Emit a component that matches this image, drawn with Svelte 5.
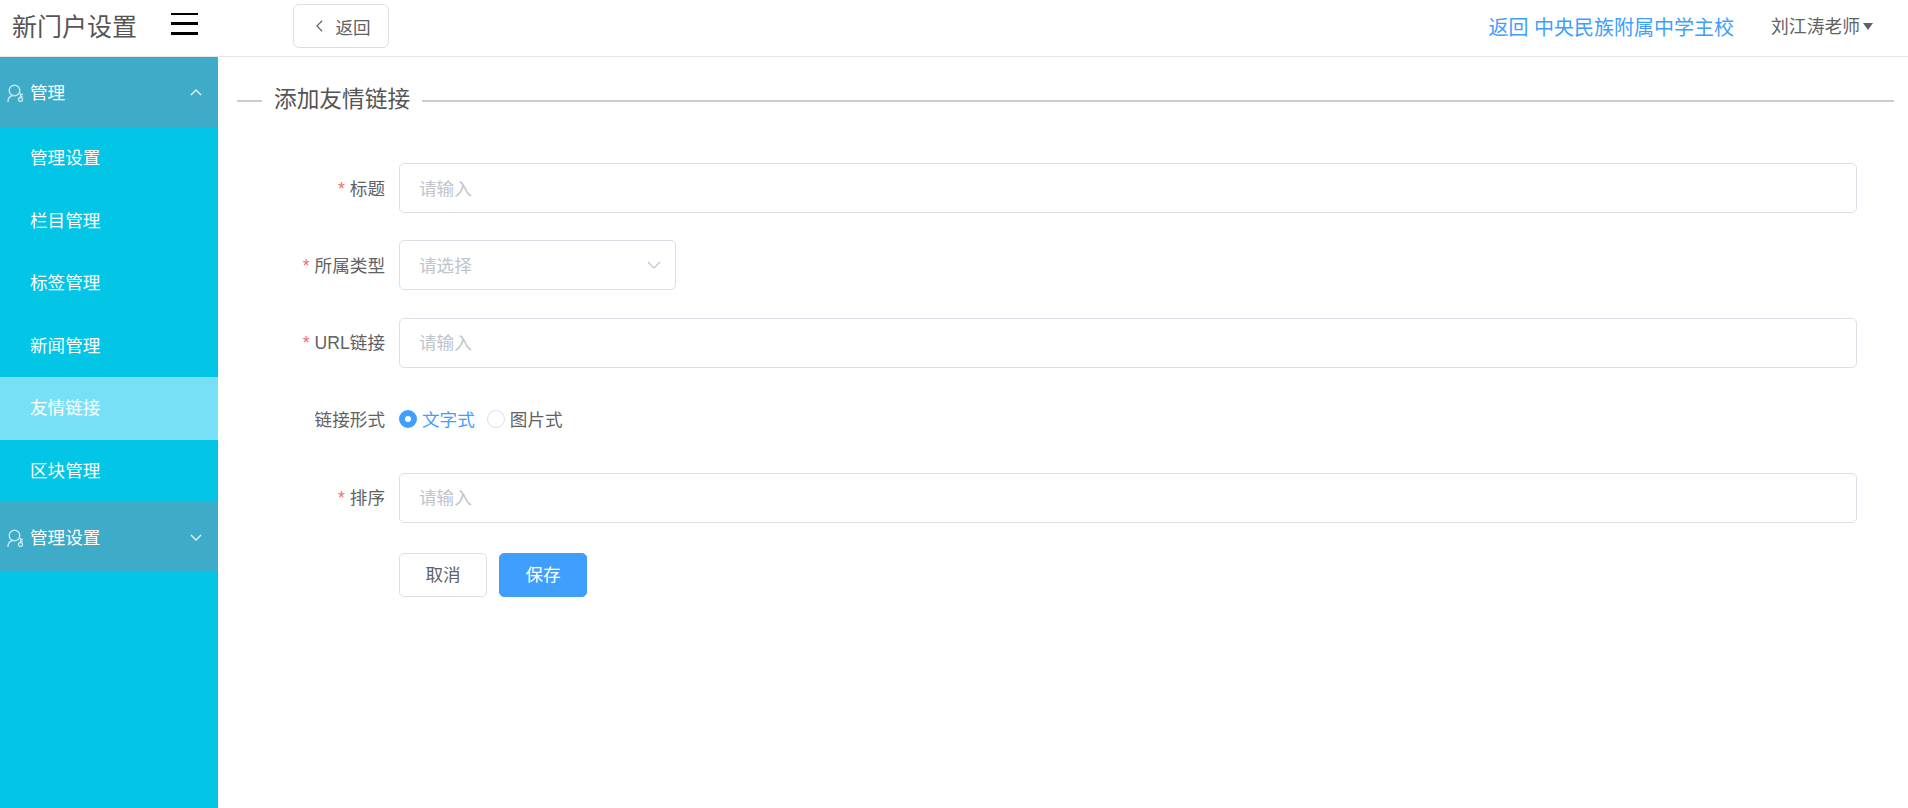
<script>
  const subs = ['管理设置', '栏目管理', '标签管理', '新闻管理', '友情链接', '区块管理'];
  const fields = [
    { latin: '', label: '标题', width: 'full' },
    { latin: '', label: '所属类型', width: 'select' },
    { latin: 'URL', label: '链接', width: 'full' }
  ];
</script>

{#snippet userIcon()}
  <svg class="uicon" viewBox="0 0 18 20" width="18" height="20" fill="none" stroke="currentColor" stroke-width="1.4" stroke-linecap="round">
    <circle cx="7.500" cy="8.500" r="5.300" />
    <path d="M1 19.500c0-3.500 2-5.500 5-6" />
    <circle cx="13.500" cy="17.500" r="2" />
    <path d="M13.500 15.500v-4M13.500 12.500h2M13.500 14.500h1.500" />
  </svg>
{/snippet}

{#snippet star()}<span class="star">*</span>{/snippet}

<div class="shell">
  <header class="top">
    <div class="title">新门户设置</div>
    <button class="burger" aria-label="menu"><i></i><i></i><i></i></button>
    <button class="back">
      <svg viewBox="0 0 10 16" width="9" height="14" fill="none" stroke="#606266" stroke-width="1.300"><path d="M8 2L2 8l6 6" /></svg>
      <span>返回</span>
    </button>
    <div class="right">
      <a class="home" href="#top">返回 中央民族附属中学主校</a>
      <span class="user"><span class="uname">刘江涛老师</span><span class="caret"></span></span>
    </div>
  </header>

  <div class="body">
    <aside class="side">
      <div class="group">
        {@render userIcon()}
        <span>管理</span>
        <svg class="chev" viewBox="0 0 12 7" width="12" height="7" fill="none" stroke="currentColor" stroke-width="1.300"><path d="M1 6l5-5 5 5" /></svg>
      </div>
      {#each subs as s}
        <div class="item" class:active={s === '友情链接'}>{s}</div>
      {/each}
      <div class="group">
        {@render userIcon()}
        <span>管理设置</span>
        <svg class="chev" viewBox="0 0 12 7" width="12" height="7" fill="none" stroke="currentColor" stroke-width="1.300"><path d="M1 1l5 5 5-5" /></svg>
      </div>
    </aside>

    <main class="main">
      <div class="heading">
        <span class="dash"></span>
        <h2>添加友情链接</h2>
        <span class="rule"></span>
      </div>

      <form class="form">
        {#each fields as f}
          <div class="row">
            <div class="label">{@render star()}{#if f.latin}<span class="latin">{f.latin}</span>{/if}{f.label}</div>
            {#if f.width === 'select'}
              <div class="select">
                <input placeholder="请选择" readonly />
                <svg viewBox="0 0 14 8" width="14" height="8" fill="none" stroke="#c0c4cc" stroke-width="1.200"><path d="M1 1l6 6 6-6" /></svg>
              </div>
            {:else}
              <input class="input" placeholder="请输入" />
            {/if}
          </div>
        {/each}

        <div class="row">
          <div class="label radio-label">链接形式</div>
          <div class="radios">
            <span class="radio on"><i></i><b>文字式</b></span>
            <span class="radio"><i></i><b>图片式</b></span>
          </div>
        </div>

        <div class="row">
          <div class="label">{@render star()}排序</div>
          <input class="input" placeholder="请输入" />
        </div>

        <div class="row actions">
          <div class="label"></div>
          <button type="button" class="btn">取消</button>
          <button type="button" class="btn primary">保存</button>
        </div>
      </form>
    </main>
  </div>
</div>

<style>
  :global(body) {
    margin: 0;
    background: #fff;
  }
  .shell {
    display: flex;
    flex-direction: column;
    height: 808px;
    overflow: hidden;
    font-family: "Noto Sans CJK SC", "Liberation Sans", sans-serif;
    color: #606266;
    font-size: 17.600px;
  }
  button, input {
    font-family: inherit;
  }
  .top {
    display: flex;
    align-items: center;
    height: 56px;
    flex: none;
    border-bottom: 1px solid #e6e6e6;
    padding-left: 12px;
    padding-right: 35px;
  }
  .title {
    width: 159px;
    font-size: 25px;
    color: #555;
    line-height: 46px;
    margin-top: -6px;
  }
  .burger {
    width: 27px;
    height: 22px;
    margin-top: -9px;
    padding: 0;
    border: 0;
    background: none;
    display: flex;
    flex-direction: column;
    justify-content: space-between;
  }
  .burger i {
    display: block;
    height: 2.500px;
    background: #000;
  }
  .back {
    margin-left: 95px;
    margin-top: -4px;
    width: 96px;
    height: 44px;
    border: 1px solid #dcdfe6;
    border-radius: 6px;
    background: #fff;
    color: #606266;
    font-size: 17.600px;
    display: flex;
    align-items: center;
    justify-content: center;
    gap: 11px;
    padding: 0 0 0 4px;
  }
  .right {
    margin-left: auto;
    display: flex;
    align-items: center;
    gap: 37px;
    margin-top: -3px;
  }
  .home {
    color: #409eff;
    font-size: 20px;
    word-spacing: 1px;
    text-decoration: none;
  }
  .user {
    display: flex;
    align-items: center;
    color: #606266;
    font-size: 17.800px;
  }
  .uname {
    margin-top: -3px;
  }
  .caret {
    margin-left: 3px;
    border-left: 5.500px solid transparent;
    border-right: 5.500px solid transparent;
    border-top: 7px solid #606266;
  }
  .body {
    flex: 1;
    display: flex;
    min-height: 0;
  }
  .side {
    width: 218px;
    flex: none;
    background: #03c5e6;
    color: #fff;
  }
  .group {
    height: 70px;
    background: #3eabc8;
    display: flex;
    align-items: center;
    padding: 0 16px 0 7px;
    gap: 5px;
  }
  .group span {
    flex: 1;
    margin-top: -2px;
  }
  .uicon {
    color: #c4e8f1;
    flex: none;
  }
  .chev {
    flex: none;
    color: #e8f7fb;
  }
  .item {
    height: 62.500px;
    line-height: 59px;
    padding-left: 30px;
  }
  .item.active {
    background: #77e0f7;
  }
  .main {
    flex: 1;
    min-width: 0;
    padding: 0 14px 0 19px;
  }
  .heading {
    display: flex;
    align-items: center;
    gap: 12px;
    height: 34px;
    margin-top: 26px;
    margin-bottom: 46px;
  }
  .dash,
  .rule {
    height: 2px;
    background: #ccc;
    margin-top: 2px;
  }
  .dash {
    width: 25px;
  }
  .rule {
    flex: 1;
  }
  .heading h2 {
    margin: -4px 0 0;
    font-size: 22.700px;
    font-weight: 400;
    color: #555;
    line-height: 34px;
  }
  .form {
    margin-left: -19px;
    padding-right: 37px;
    display: flex;
    flex-direction: column;
    gap: 27.400px;
  }
  .row {
    display: flex;
    align-items: center;
    min-height: 50px;
  }
  .label {
    width: 167px;
    padding-right: 14px;
    padding-bottom: 2px;
    flex: none;
    text-align: right;
    color: #606266;
  }
  .star {
    color: #f56c6c;
    margin-right: 5px;
    font-family: "Liberation Sans", sans-serif;
  }
  .latin {
    font-family: "Liberation Sans", sans-serif;
  }
  .input,
  .select {
    box-sizing: border-box;
    height: 50px;
    border: 1px solid #dcdfe6;
    border-radius: 5px;
    background: #fff;
  }
  .input {
    flex: 1;
    min-width: 0;
    padding: 0 19px 2px;
    font-size: 17.600px;
    outline: none;
  }
  .select {
    width: 277px;
    display: flex;
    align-items: center;
    padding-right: 14px;
  }
  .select input {
    flex: 1;
    min-width: 0;
    border: 0;
    padding: 0 0 2px 19px;
    background: none;
    font-size: 17.600px;
    outline: none;
  }
  input::placeholder {
    color: #c0c4cc;
    opacity: 1;
  }
  .radio-label {
    padding-bottom: 4px;
  }
  .radios {
    display: flex;
    align-items: center;
    gap: 12px;
  }
  .radio {
    display: flex;
    align-items: center;
    gap: 5px;
    color: #606266;
  }
  .radio b {
    font-weight: 400;
    margin-top: -3px;
  }
  .radio i {
    box-sizing: border-box;
    width: 18px;
    height: 18px;
    border-radius: 50%;
    border: 1px solid #dcdfe6;
    background: #fff;
    margin-top: -2px;
  }
  .radio.on {
    color: #409eff;
  }
  .radio.on i {
    border: 6px solid #409eff;
  }
  .actions {
    align-items: flex-start;
    gap: 12px;
    margin-top: 3px;
  }
  .actions .label {
    margin-right: -12px;
  }
  .btn {
    box-sizing: border-box;
    width: 88px;
    height: 44px;
    border: 1px solid #dcdfe6;
    border-radius: 5px;
    background: #fff;
    color: #606266;
    font-size: 17.600px;
    padding: 0 0 2px;
  }
  .btn.primary {
    background: #409eff;
    border-color: #409eff;
    color: #fff;
  }
</style>
